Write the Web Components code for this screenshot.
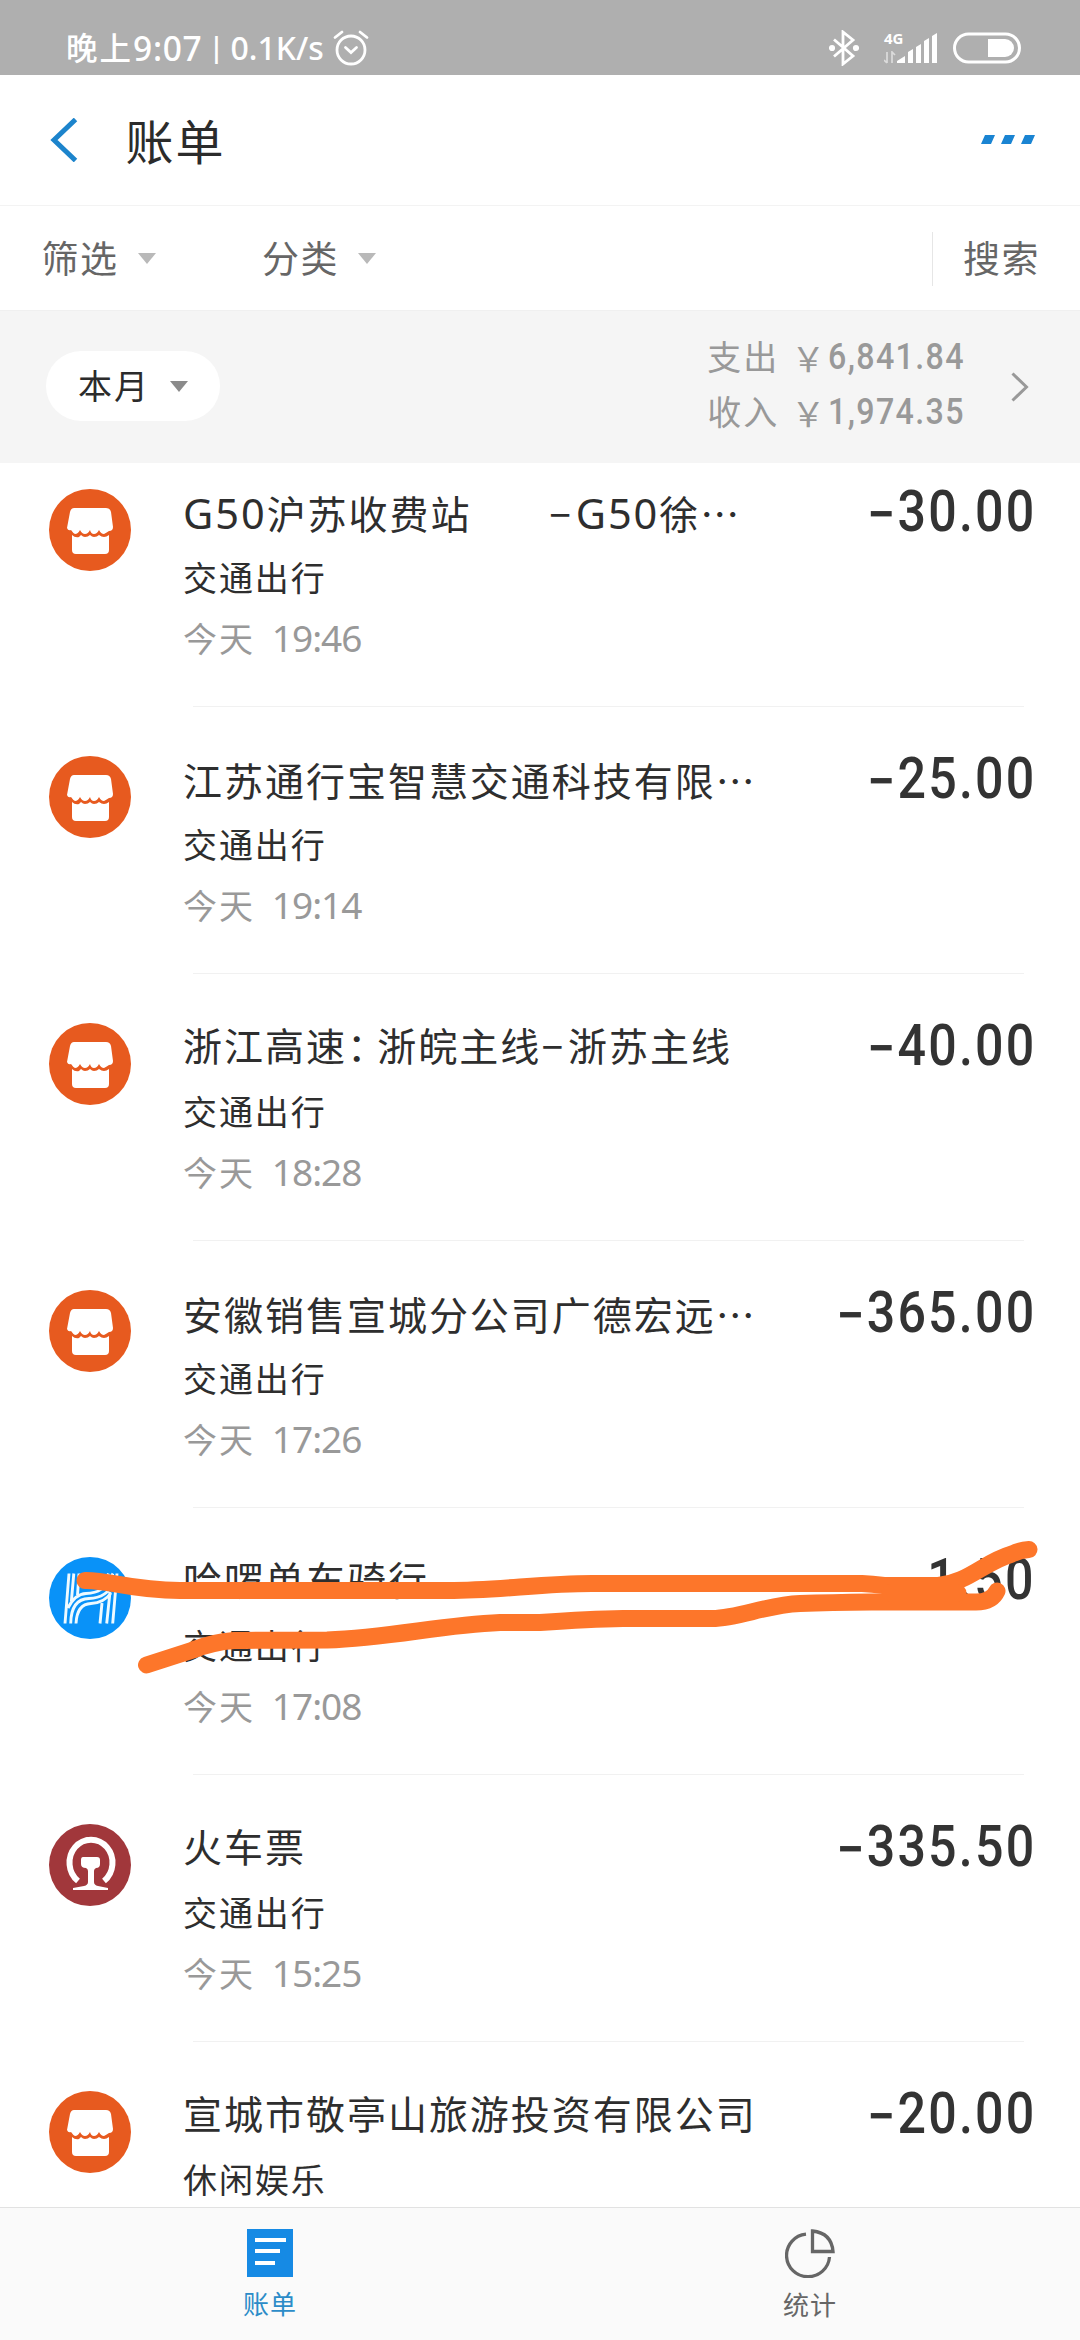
<!DOCTYPE html>
<html lang="zh-CN">
<head>
<meta charset="utf-8">
<title>账单</title>
<style>
html,body{margin:0;padding:0;background:#fff}
body{font-family:"Noto Sans","Noto Sans CJK SC",sans-serif;color:#333;width:1080px;height:2340px;overflow:hidden}
</style>
</head>
<body>
<bill-app></bill-app>
<script>
const define = (name, html) => {
  const t = document.createElement('template');
  t.innerHTML = html;
  customElements.define(name, class extends HTMLElement {
    constructor() {
      super();
      this.attachShadow({ mode: 'open' }).appendChild(t.content.cloneNode(true));
    }
  });
};

define('status-bar', `
<style>
:host{display:flex;box-sizing:border-box;height:75px;padding:26px 59px 5px 66px;background:#afafaf;color:#fff;justify-content:space-between;align-items:center}
.l{display:flex;align-items:center;font-size:32px;line-height:44px;font-weight:500;white-space:pre}
.zh{letter-spacing:2px;font-size:31.5px}
.h{font-size:33.500px;letter-spacing:.7px}
.bar{width:28px;text-align:center;font-size:27px;font-weight:600;margin-top:-2px}
.l svg{margin-left:9px}
.r{display:flex;height:34px;align-items:center}
.net{display:flex;flex-direction:column;font-size:15px;line-height:12px;font-weight:700;width:22px;height:32px;margin-left:25px}
.net svg{margin-top:7px}
</style>
<div class="l"><span class="zh">晚上</span><span class="h">9:07</span><span class="bar">|</span><span>0.1K/s</span><svg width="36" height="36" viewBox="0 0 36 36" fill="none" stroke="#fff" stroke-width="2.8" stroke-linecap="round"><circle cx="18" cy="20" r="14"/><path d="M12.5 17.5l5.5 5 5.5-5M2 7.500l7-5.500M34 7.500l-7-5.500"/></svg></div>
<div class="r">
<svg width="30" height="36" viewBox="0 0 30 36" fill="none" stroke="#fff" stroke-width="2.8"><path d="M5 9.500l19 16.500-10 8V2l10 8L5 26.500"/><circle cx="3" cy="18" r="1.700" fill="#fff"/><circle cx="27" cy="18" r="1.700" fill="#fff"/></svg>
<div class="net"><span>4G</span><svg width="12" height="13" viewBox="0 0 12 13" fill="none" stroke="#dcdcdc" stroke-width="1.700"><path d="M3 1v11M0 9l3 3M8 12V1l3 3"/></svg></div>
<svg style="margin-left:-9px" width="40" height="32" viewBox="0 0 40 32" fill="#fff"><path d="M0 31v-2l8-5v7zM11 20l5-3v14h-5zM19 15l5-3v19h-5zM27 9l5-3v25h-5zM35 4l5-3v30h-5z"/></svg>
<svg style="margin-left:16px" width="68" height="32" viewBox="0 0 68 32"><rect x="1.500" y="2" width="65" height="28" rx="14" fill="none" stroke="#fff" stroke-width="3"/><path d="M35 7h17a9 9 0 0 1 0 18H35z" fill="#fff"/></svg>
</div>`);

define('nav-header', `
<style>
:host{display:flex;box-sizing:border-box;height:131px;padding:0 45px 0 50px;align-items:center;border-bottom:1px solid #f3f3f3}
h1{margin:3px auto 0 47.500px;font-size:48px;line-height:60px;font-weight:400;letter-spacing:2px;color:#2b2b2b}
svg{display:block}
.m{margin-top:-1px}
</style>
<svg width="28" height="44" viewBox="0 0 28 44" fill="none" stroke="#1c84cc" stroke-width="5"><path d="M25.500 1.500L4 22l21.500 20.500"/></svg>
<h1><slot></slot></h1>
<svg class="m" width="54" height="9" viewBox="0 0 54 9" fill="#1a84d2"><path d="M4 0h10l-4 9H0zM24 0h10l-4 9H20zM44 0h10l-4 9H40z"/></svg>`);

define('drop-label', `
<style>
:host{display:flex;align-items:center;font-size:37px;line-height:54px;letter-spacing:1.500px;color:#666}
.t{width:0;height:0;border:solid transparent;border-width:11px 9px 0;border-top-color:var(--tri,#b9b9b9);margin:var(--up,-2px) 0 0 var(--gap,19px)}
</style><span><slot></slot></span><i class="t"></i>`);

define('filter-bar', `
<style>
:host{display:flex;box-sizing:border-box;height:105px;align-items:center;padding:2px 40px 0 41.500px;border-bottom:1px solid #f0f0f0;color:#666;font-size:37px;line-height:54px;letter-spacing:1.500px}
.g{display:flex;gap:106.500px;flex:1}
.s{border-left:1px solid #e6e6e6;padding-left:30px}
</style>
<div class="g"><drop-label>筛选</drop-label><drop-label>分类</drop-label></div><div class="s">搜索</div>`);

define('month-summary', `
<style>
:host{display:flex;box-sizing:border-box;height:152px;background:#f5f5f5;align-items:center;padding:0 51px 0 46px;color:#999}
.p{--tri:#8b8b8b;--gap:20px;--up:0;font-size:34px;letter-spacing:2px;color:#2b2b2b;background:#fff;border-radius:35px;height:70px;box-sizing:border-box;padding:0 32px 0 32px;margin:-2px auto 0 0;line-height:70px}
.r{display:flex;flex-direction:column;align-items:flex-end;margin-top:-4px}
.r div{display:flex;font-size:34px;line-height:55px}
.k{letter-spacing:2px}
.y{font-family:"Noto Sans CJK SC",sans-serif;margin-left:12px}
.n{font-family:Roboto,sans-serif;font-size:36px;letter-spacing:1.500px;font-weight:500;transform:scaleX(.895);transform-origin:right;margin-left:-13px;margin-right:-2px}
svg{margin-left:48px}
</style>
<drop-label class="p">本月</drop-label>
<div class="r"><div><span class="k">支出</span><span class="y">￥</span><span class="n">6,841.84</span></div>
<div><span class="k">收入</span><span class="y">￥</span><span class="n">1,974.35</span></div></div>
<svg width="18" height="30" viewBox="0 0 18 30" fill="none" stroke="#999" stroke-width="3"><path d="M1.500 1.500L15.500 15 1.500 28.500"/></svg>`);

const ICONS = {
  shop: `<svg viewBox="0 0 82 82"><circle cx="41" cy="41" r="41" fill="#e75a1f"/><g fill="#fff"><path d="M25 19h32q4 0 5 4l2 15q0 4-4 4-3 2-5 3-3 0-5-4-2 4-5 4-3 0-4-4-2 4-5 4-3 0-5-4-2 4-5 4-2-1-4-4-3 1-4-2l3-16q1-4 4-4z"/><path d="M23 46q3 3 7 2l2-2q2 2 4 2 3 0 5-2 2 2 4 2 3 0 5-2 5 4 10 0v15q0 4-4 4H27q-4 0-4-4z"/></g></svg>`,
  bike: `<svg viewBox="0 0 82 82"><circle cx="41" cy="41" r="41" fill="#0992f8"/><g fill="none" stroke="#eefaff" stroke-width="2.900"><path d="M20 16.500L16 66.500M24.800 16.500L22.300 45M30 16.500L28.500 38M57.500 21l2-4.500M62.500 19l1.500-2.500M68 16.500L63.700 66.500M61 35L57.700 66.500M53 46L51 66.500M19 51Q26 37 37 36.500 56 36 60 21M21.700 66.500Q22 42 40 41.500 58 41 65 25M27 66.500Q28 47 42 46.500 55 46 62 36"/></g></svg>`,
  rail: `<svg viewBox="0 0 82 82"><circle cx="41" cy="41" r="41" fill="#a1373b"/><path d="M29 57A21.500 23 0 1 1 55 57" fill="none" stroke="#fff" stroke-width="6"/><path d="M35 17q1-4 4-4h4q3 0 4 4zM34 33h14q3 0 3 3v4q0 4-4 4-2 1-2 3v11q0 3 4 4l10 2v2H24v-2l11-2q4-1 4-4V47q0-2-2-3-5 0-5-4v-4q0-3 2-3z" fill="#fff"/></svg>`
};

/* A single transaction: icon, title, category, time and amount */
customElements.define('bill-row', class extends HTMLElement {
  connectedCallback() {
    const a = n => this.getAttribute(n);
    const title = a('title-text').replace('…', '<b>…</b>').replace('：', '<i>：</i>').replace('−', '<s>−</s>').replace(/G50/g, '<u>G50</u>');
    const date = a('time') ? `<div class="d">今天<span>${a('time')}</span></div>` : '';
    this.attachShadow({ mode: 'open' }).innerHTML = `
<style>
:host{display:flex;flex:none;box-sizing:border-box;height:267px;padding:45px 47px 0 49px;position:relative;background:linear-gradient(#f1f1f1,#f1f1f1) 193px 100%/831px 1px no-repeat}
.i{width:82px;height:82px;margin-top:4px;flex:none}
.b{margin:-1px 0 0 52px;flex:1;min-width:0;white-space:pre;color:#2e2e2e}
.t{font-size:39px;line-height:56px;height:56px;letter-spacing:1.980px}
.t b{font-weight:400;font-family:"Noto Sans CJK SC",sans-serif}
.t i{font-style:normal;letter-spacing:-8.700px}
.t s{text-decoration:none;letter-spacing:4.500px}
.t u{text-decoration:none;font-size:41.500px}
.c{font-size:34px;line-height:44px;height:44px;margin-top:16px;letter-spacing:1.900px}
.d{font-size:34px;line-height:44px;height:44px;margin-top:16px;letter-spacing:1.900px;color:#999}
.d span{font-size:37px;letter-spacing:-1px;margin-left:17px}
.a{font-family:Roboto,sans-serif;font-weight:500;font-size:57px;line-height:60px;height:60px;letter-spacing:2.500px;transform:scaleX(.88);transform-origin:right;margin:-3px -3px 0 0;color:#333}
.a span{position:relative;top:3px}
</style>
<div class="i">${ICONS[a('icon')]}</div>
<div class="b"><div class="t">${title}</div><div class="c">${a('kind')}</div>${date}</div>
<div class="a">${a('amount').replace('−', '<span>−</span>')}</div>`;
  }
});

define('tab-item', `
<style>
:host{display:flex;flex:1;flex-direction:column;align-items:center;padding-top:21px;font-size:26px;line-height:36px;letter-spacing:1px;color:#666}
:host([active]){color:#2c8cc8}
.l{margin-top:9px}
::slotted(svg){display:block;flex:none}
</style><slot name="icon"></slot><span class="l"><slot></slot></span>`);

define('tab-bar', `
<style>:host{display:flex;box-sizing:border-box;height:133px;flex:none;background:#fafafa;border-top:1px solid #e2e2e2;position:relative}</style>
<tab-item active><svg slot="icon" width="46" height="48" viewBox="0 0 46 48"><path fill="#168ae4" d="M0 0h46v48H0z"/><path fill="#fff" d="M8 9h31v4H8zM8 20h25v4H8zM8 32h20v4H8z"/></svg>账单</tab-item>
<tab-item><svg slot="icon" width="50" height="49" viewBox="0 0 50 49" fill="none" stroke="#666" stroke-width="3.300"><path d="M21 5.200A21.500 21.300 0 1 0 44.500 28M27.500 2v20.500H48Q46.500 4 27.500 2z"/></svg>统计</tab-item>`);

/* Freehand marker strokes laid over the list */
define('marker-strokes', `
<style>:host{position:absolute;left:0;top:1500px;pointer-events:none}svg{display:block}</style>
<svg width="1080" height="200" viewBox="0 1500 1080 200" fill="none" stroke="#fd762a" stroke-width="17" stroke-linecap="round" stroke-linejoin="round">
<path d="M85 1580.500C110 1580 130 1590.500 180 1590.500H448C500 1590.500 540 1583.500 592 1583.500H862Q872 1584 884 1585.500H938C968 1583 984 1562 1012 1554Q1020 1550 1029 1549.500"/>
<path d="M146.500 1665L193 1650Q213 1642 234 1640.500Q260 1640 327 1640C390 1638 440 1625 500 1622.500H540Q590 1619 623 1618.500H712C740 1618 765 1605 800 1603.500Q830 1602.500 871 1602H976Q992 1602 997 1591"/>
<path d="M890 1593h68"/>
</svg>`);

define('bill-app', `
<style>
:host{display:flex;flex-direction:column;width:1080px;height:2340px;position:relative;overflow:hidden;background:#fff}
.list{flex:1;min-height:0;overflow:hidden;display:flex;flex-direction:column}
.list>:first-child{margin-top:-23px}
</style>
<status-bar></status-bar>
<nav-header>账单</nav-header>
<filter-bar></filter-bar>
<month-summary></month-summary>
<div class="list">
<bill-row icon="shop" title-text="G50沪苏收费站　   −G50徐…" kind="交通出行" time="19:46" amount="−30.00"></bill-row>
<bill-row icon="shop" title-text="江苏通行宝智慧交通科技有限…" kind="交通出行" time="19:14" amount="−25.00"></bill-row>
<bill-row icon="shop" title-text="浙江高速：浙皖主线−浙苏主线" kind="交通出行" time="18:28" amount="−40.00"></bill-row>
<bill-row icon="shop" title-text="安徽销售宣城分公司广德宏远…" kind="交通出行" time="17:26" amount="−365.00"></bill-row>
<bill-row icon="bike" title-text="哈啰单车骑行" kind="交通出行" time="17:08" amount="−1.50"></bill-row>
<bill-row icon="rail" title-text="火车票" kind="交通出行" time="15:25" amount="−335.50"></bill-row>
<bill-row icon="shop" title-text="宣城市敬亭山旅游投资有限公司" kind="休闲娱乐" amount="−20.00"></bill-row>
</div>
<tab-bar></tab-bar>
<marker-strokes></marker-strokes>`);
</script>
</body>
</html>
